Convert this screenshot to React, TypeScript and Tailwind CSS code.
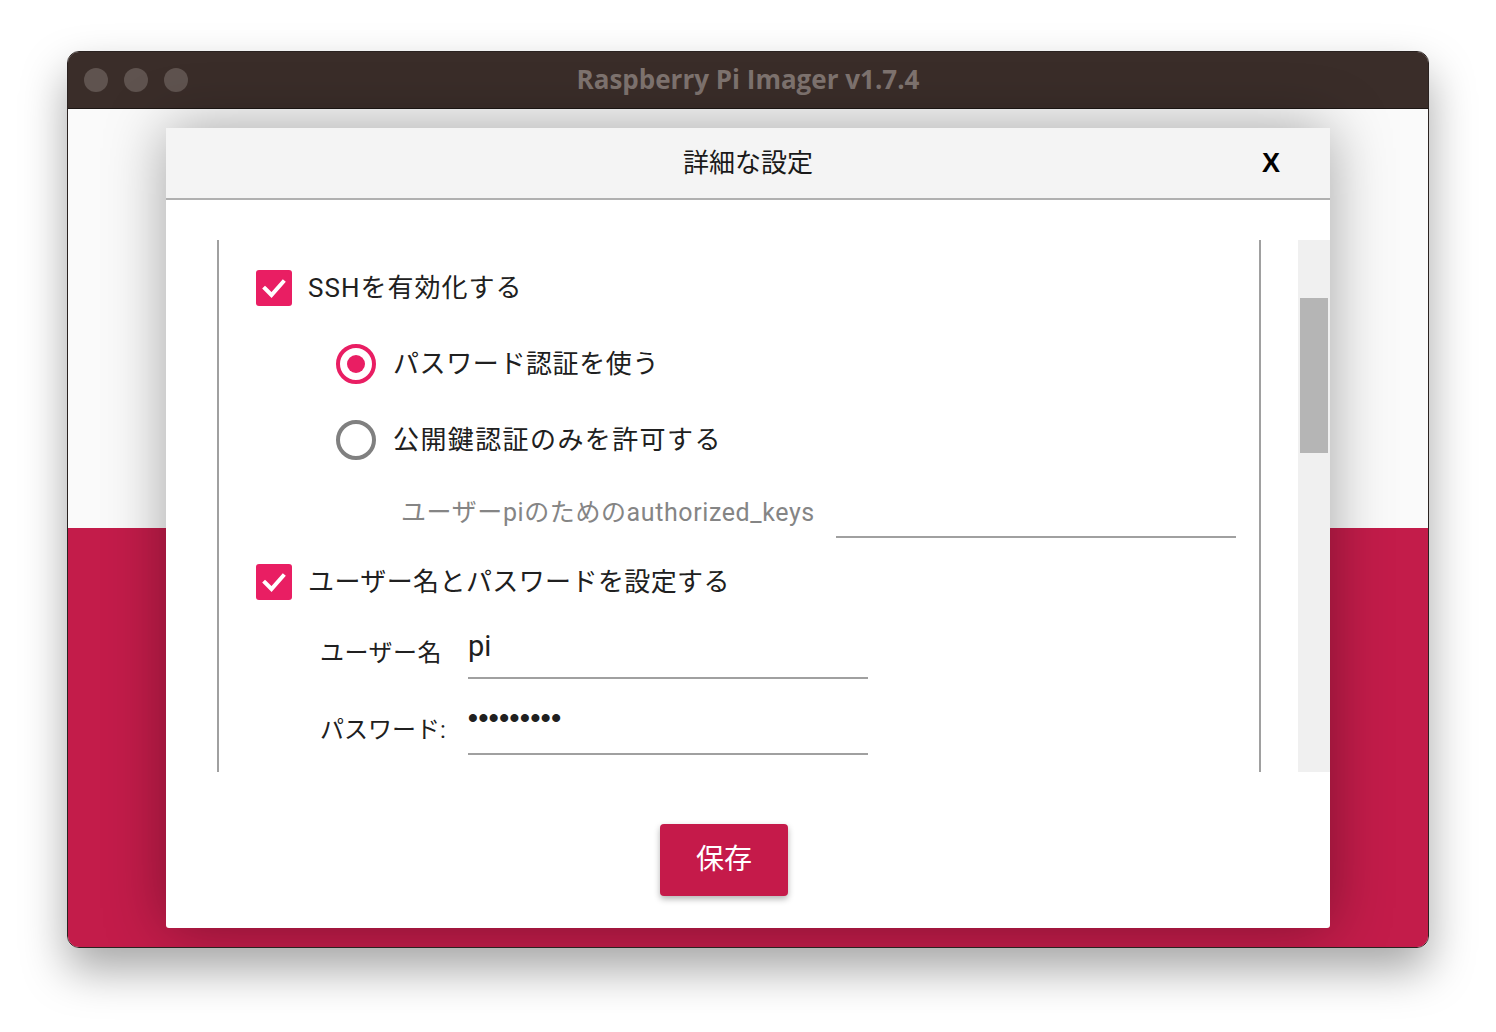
const ui = { fontFamily: "Roboto, 'Noto Sans CJK JP', sans-serif" };

function CheckBox() {
  return (
    <div className="w-[36px] h-[36px] rounded-[3px] bg-[#e91e63] flex items-center justify-center shrink-0">
      <svg width="26" height="26" viewBox="0 0 26 26">
        <polyline
          points="4,13.5 10.5,20 22,7"
          fill="none"
          stroke="white"
          strokeWidth="4"
          strokeLinecap="square"
        />
      </svg>
    </div>
  );
}

function Radio({ checked }: { checked?: boolean }) {
  return (
    <div
      className={
        checked
          ? "w-[40px] h-[40px] rounded-full border-[4px] border-[#e91e63] flex items-center justify-center shrink-0"
          : "w-[40px] h-[40px] rounded-full border-[4px] border-[#808080] shrink-0"
      }
    >
      {checked && <div className="w-[18px] h-[18px] rounded-full bg-[#e91e63]" />}
    </div>
  );
}

function Field({ children }: { children?: React.ReactNode }) {
  return (
    <div className="w-[400px] h-[56px] border-b-2 border-[#a0a0a0] flex items-center pb-[8px] shrink-0">
      {children}
    </div>
  );
}

export default function App() {
  return (
    <div className="w-[1496px] h-[1032px] bg-white pt-[51px] pl-[67px]" style={ui}>
      <div className="w-[1362px] h-[897px] rounded-[12px] overflow-hidden border border-[#2a2220] flex flex-col shadow-[0_22px_45px_rgba(0,0,0,0.35)]">
        {/* title bar */}
        <div className="h-[57px] bg-[#3a2d29] border-b border-[#1c1614] grid grid-cols-[1fr_auto_1fr] items-center shrink-0">
          <div className="flex items-center gap-[16px] pl-[16px]">
            <div className="w-[24px] h-[24px] rounded-full bg-[#5f534f]" />
            <div className="w-[24px] h-[24px] rounded-full bg-[#5f534f]" />
            <div className="w-[24px] h-[24px] rounded-full bg-[#5f534f]" />
          </div>
          <div
            className="text-[26px] font-bold text-[#7e736f] leading-none pb-[2px]"
            style={{ fontFamily: "'Open Sans', 'Liberation Sans', sans-serif" }}
          >
            Raspberry Pi Imager v1.7.4
          </div>
          <div />
        </div>

        {/* window content */}
        <div className="flex-1 relative flex flex-col">
          <div className="h-[419px] bg-[#fafafa]" />
          <div className="flex-1 bg-[#c31c4a]" />

          {/* dialog */}
          <div className="absolute left-[98px] top-[19px] w-[1164px] h-[800px] bg-white rounded-[3px] shadow-[0_0_60px_rgba(0,0,0,0.35)] flex flex-col">
            <div className="h-[72px] bg-[#f4f4f4] border-b-2 border-[#b0b0b0] grid grid-cols-[1fr_auto_1fr] items-center shrink-0">
              <div />
              <div className="text-[26px] text-[#1a1a1a]">詳細な設定</div>
              <div className="flex justify-end pr-[50px]">
                <span
                  className="text-[27px] font-bold text-black"
                  style={{ fontFamily: "'Liberation Sans', Arial, sans-serif" }}
                >
                  X
                </span>
              </div>
            </div>

            <div className="flex pt-[40px] shrink-0">
              <div className="ml-[51px] w-[1044px] h-[532px] border-x-2 border-[#a0a0a0] pl-[37px] pt-[30px] flex flex-col text-[#202020]">
                <div className="flex items-center gap-[16px]">
                  <CheckBox />
                  <span className="text-[26px] leading-none tracking-[1px]">SSHを有効化する</span>
                </div>

                <div className="flex items-center gap-[17px] ml-[80px] mt-[38px]">
                  <Radio checked />
                  <span className="text-[26px] leading-none tracking-[0.6px]">パスワード認証を使う</span>
                </div>

                <div className="flex items-center gap-[17px] ml-[80px] mt-[36px]">
                  <Radio />
                  <span className="text-[26px] leading-none tracking-[1.4px]">公開鍵認証のみを許可する</span>
                </div>

                <div className="flex items-center ml-[145px] mt-[26px]">
                  <span className="text-[25px] leading-none text-[#858585] w-[435px] tracking-[0.6px]">
                    ユーザーpiのためのauthorized_keys
                  </span>
                  <div className="w-[400px] h-[52px] border-b-2 border-[#a0a0a0]" />
                </div>

                <div className="flex items-center gap-[16px] mt-[26px]">
                  <CheckBox />
                  <span className="text-[26px] leading-none tracking-[0.4px]">ユーザー名とパスワードを設定する</span>
                </div>

                <div className="flex items-center ml-[64px] mt-[23px]">
                  <span className="w-[148px] text-[24px] leading-none tracking-[0.5px] pt-[3px]">ユーザー名</span>
                  <Field>
                    <span className="text-[29px] leading-none">pi</span>
                  </Field>
                </div>

                <div className="flex items-center ml-[64px] mt-[20px]">
                  <span className="w-[148px] text-[24px] leading-none pt-[6px]">パスワード:</span>
                  <Field>
                    <span
                      className="text-[28px] leading-none tracking-[0.6px] pb-[8px] font-bold"
                      style={{ fontFamily: "'Liberation Sans', Arial, sans-serif" }}
                    >
                      •••••••••
                    </span>
                  </Field>
                </div>
              </div>

              <div className="ml-[37px] w-[32px] h-[532px] bg-[#f0f0f0] pt-[58px] px-[2px]">
                <div className="h-[155px] bg-[#b5b5b5]" />
              </div>
            </div>

            <div className="flex justify-center pr-[48px] pt-[52px]">
              <button className="w-[128px] h-[72px] rounded-[4px] bg-[#c51a4a] text-white text-[28px] shadow-[0_3px_6px_rgba(0,0,0,0.3)]">
                保存
              </button>
            </div>
          </div>
        </div>
      </div>
    </div>
  );
}
